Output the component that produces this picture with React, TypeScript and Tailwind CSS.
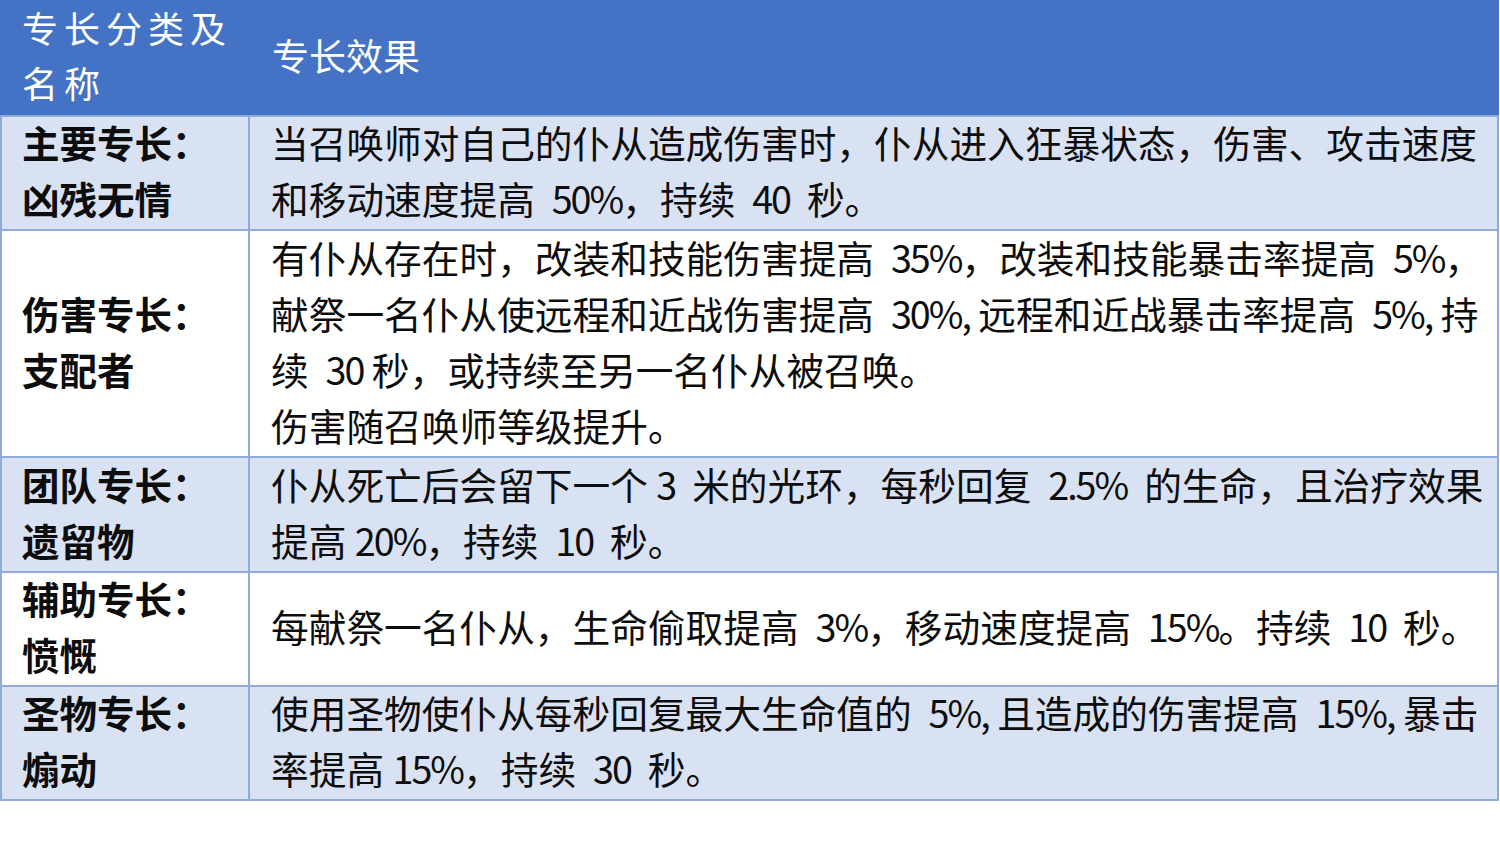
import React from 'react';

type Row = {
  label: [string, string];
  lines: string[];
  shaded: boolean;
  h: string;
};

const rows: Row[] = [
  {
    label: ['主要专长：', '凶残无情'],
    lines: [
      '当召唤师对自己的仆从造成伤害时，仆从进入狂暴状态，伤害、攻击速度',
      '和移动速度提高  50%，持续  40  秒。',
    ],
    shaded: true,
    h: 'h-[114px]',
  },
  {
    label: ['伤害专长：', '支配者'],
    lines: [
      '有仆从存在时，改装和技能伤害提高  35%，改装和技能暴击率提高  5%，',
      '献祭一名仆从使远程和近战伤害提高  30%, 远程和近战暴击率提高  5%, 持',
      '续  30 秒，或持续至另一名仆从被召唤。',
      '伤害随召唤师等级提升。',
    ],
    shaded: false,
    h: 'h-[227px]',
  },
  {
    label: ['团队专长：', '遗留物'],
    lines: [
      '仆从死亡后会留下一个 3  米的光环，每秒回复  2.5%  的生命，且治疗效果',
      '提高 20%，持续  10  秒。',
    ],
    shaded: true,
    h: 'h-[115px]',
  },
  {
    label: ['辅助专长：', '愤慨'],
    lines: ['每献祭一名仆从，生命偷取提高  3%，移动速度提高  15%。持续  10  秒。'],
    shaded: false,
    h: 'h-[114px]',
  },
  {
    label: ['圣物专长：', '煽动'],
    lines: [
      '使用圣物使仆从每秒回复最大生命值的  5%, 且造成的伤害提高  15%, 暴击',
      '率提高 15%，持续  30  秒。',
    ],
    shaded: true,
    h: 'h-[114px]',
  },
];

const font = { fontFamily: '"Noto Sans CJK SC", sans-serif' };

// numbers and percent signs are set a little tighter, like the narrow latin of the original
function Line({ text }: { text: string }) {
  const parts = text.split(/([0-9.%,]+)/);
  return (
    <div className="whitespace-pre">
      {parts.map((p, k) =>
        /^[0-9.%,]+$/.test(p) ? (
          <span key={k} className="tracking-[-2px]">
            {p}
          </span>
        ) : (
          <span key={k}>{p}</span>
        )
      )}
    </div>
  );
}

export default function App() {
  return (
    <div className="w-[1500px] h-[857px] bg-white" style={font}>
      <div className="w-[1499px]">
        {/* header */}
        <div className="flex h-[115px] bg-[#4472c4] text-white">
          <div className="w-[250px] pl-[22px] text-[36px] leading-[55px] tracking-[6px]">
            <div className="whitespace-nowrap">专长分类及</div>
            <div className="whitespace-nowrap">名称</div>
          </div>
          <div className="flex flex-1 items-center pb-[4px] pl-[22px] text-[37px]">专长效果</div>
        </div>

        {/* body */}
        <div className="border-x-2 border-b-2 border-[#8faadc]">
          {rows.map((row, i) => (
            <div
              key={i}
              className={
                'flex border-t-2 border-[#8faadc] text-[#0d0d0d] ' +
                row.h +
                ' ' +
                (row.shaded ? 'bg-[#d9e2f3]' : 'bg-white')
              }
            >
              <div className="flex w-[248px] shrink-0 flex-col justify-center border-r-2 border-[#8faadc] pb-[6px] pl-[20px] text-[37.5px] font-bold leading-[56px]">
                <div className="whitespace-nowrap">{row.label[0]}</div>
                <div className="whitespace-nowrap">{row.label[1]}</div>
              </div>
              <div className="flex flex-1 flex-col justify-center pb-[6px] pl-[21px] text-[37.7px] leading-[56px]">
                {row.lines.map((line, j) => (
                  <Line key={j} text={line} />
                ))}
              </div>
            </div>
          ))}
        </div>
      </div>
    </div>
  );
}
